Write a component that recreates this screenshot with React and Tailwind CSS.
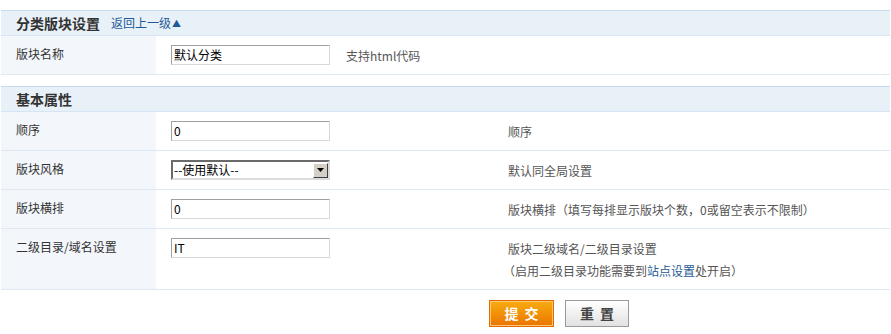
import React from 'react';

const font = { fontFamily: '"Noto Sans CJK SC", "Liberation Sans", sans-serif' };

function Header({ title, children }) {
    return (
        <div className="flex items-center h-[26px] px-[15px] bg-[#e8f0f8] border-t border-t-[#c6daef] border-b border-b-[#d6e5f3]">
            <span className="text-[14px] font-bold text-[#333] leading-none">{title}</span>
            {children}
        </div>
    );
}

function TextInput({ value }) {
    return (
        <div className="w-[159px] h-[20px] bg-white border border-[#a0a0a0] border-r-[#d8d8d8] border-b-[#d8d8d8] px-[2px] text-[12px] leading-[17px] text-[#000]">
            {value}
        </div>
    );
}

function Select({ value }) {
    return (
        <div className="w-[159px] h-[20px] flex bg-white border-2 border-t-[#6a6a6a] border-l-[#6a6a6a] border-r-[#dcdcdc] border-b-[#dcdcdc]">
            <div className="flex-1 text-[12px] leading-[16px] text-black pl-[1px]">{value}</div>
            <div className="w-[15px] h-[15px] mt-[0.5px] bg-[#d4d0c8] border border-t-white border-l-white border-r-[#404040] border-b-[#404040] flex items-center justify-center">
                <svg width="7" height="4" viewBox="0 0 7 4"><path d="M0 0h7L3.5 4z" fill="#000" /></svg>
            </div>
        </div>
    );
}

function Row({ label, height = 'h-[39px]', children, desc }) {
    return (
        <div className={`flex ${height} border-b border-b-[#dfe9f3]`}>
            <div className="w-[155px] bg-[#f3f7fc] pl-[15px] pt-[9px] text-[12px] text-[#333]">{label}</div>
            <div className="w-[337px] pl-[15px] pt-[9px]">{children}</div>
            <div className="flex-1 pl-[15px] pt-[9px] text-[12px] text-[#555] leading-[22px]">{desc}</div>
        </div>
    );
}

export default function App() {
    return (
        <div className="w-[891px] h-[334px] bg-white pt-[10px] pl-[1px] pr-[1px]" style={font}>
            <Header title="分类版块设置">
                <a className="ml-[11px] text-[12px] text-[#1f5a96] leading-none flex items-center">
                    返回上一级<span className="text-[9px] ml-[1px]">▲</span>
                </a>
            </Header>
            <div className="flex h-[39px] border-b border-b-[#dfe9f3]">
                <div className="w-[155px] bg-[#f3f7fc] pl-[15px] pt-[9px] text-[12px] text-[#333]">版块名称</div>
                <div className="pl-[15px] pt-[9px]"><TextInput value="默认分类" /></div>
                <div className="pl-[16px] pt-[9px] text-[12px] text-[#555] leading-[22px]">支持html代码</div>
            </div>
            <div className="h-[11px]" />
            <Header title="基本属性" />
            <Row label="顺序" desc="顺序"><TextInput value="0" /></Row>
            <Row label="版块风格" desc="默认同全局设置"><Select value="--使用默认--" /></Row>
            <Row label="版块横排" desc="版块横排（填写每排显示版块个数，0或留空表示不限制）"><TextInput value="0" /></Row>
            <Row
                label="二级目录/域名设置"
                height="h-[61px]"
                desc={
                    <>
                        <div>版块二级域名/二级目录设置</div>
                        <div className="-ml-[5px]">（启用二级目录功能需要到<a className="text-[#1f5a96]">站点设置</a>处开启）</div>
                    </>
                }
            >
                <TextInput value="IT" />
            </Row>
            <div className="flex pl-[488px] pt-[10px] gap-[11px]">
                <button className="w-[65px] h-[27px] border border-[#e06a00] bg-gradient-to-b from-[#f8ac10] to-[#ea7400] text-white text-[14px] font-bold tracking-[6px] pl-[6px] shadow-[inset_0_0_0_1px_#ffc870]">
                    提交
                </button>
                <button className="w-[64px] h-[27px] border border-[#9a9a9a] bg-gradient-to-b from-white to-[#e2e2e2] text-[#444] text-[14px] font-bold tracking-[6px] pl-[6px]">
                    重置
                </button>
            </div>
        </div>
    );
}
